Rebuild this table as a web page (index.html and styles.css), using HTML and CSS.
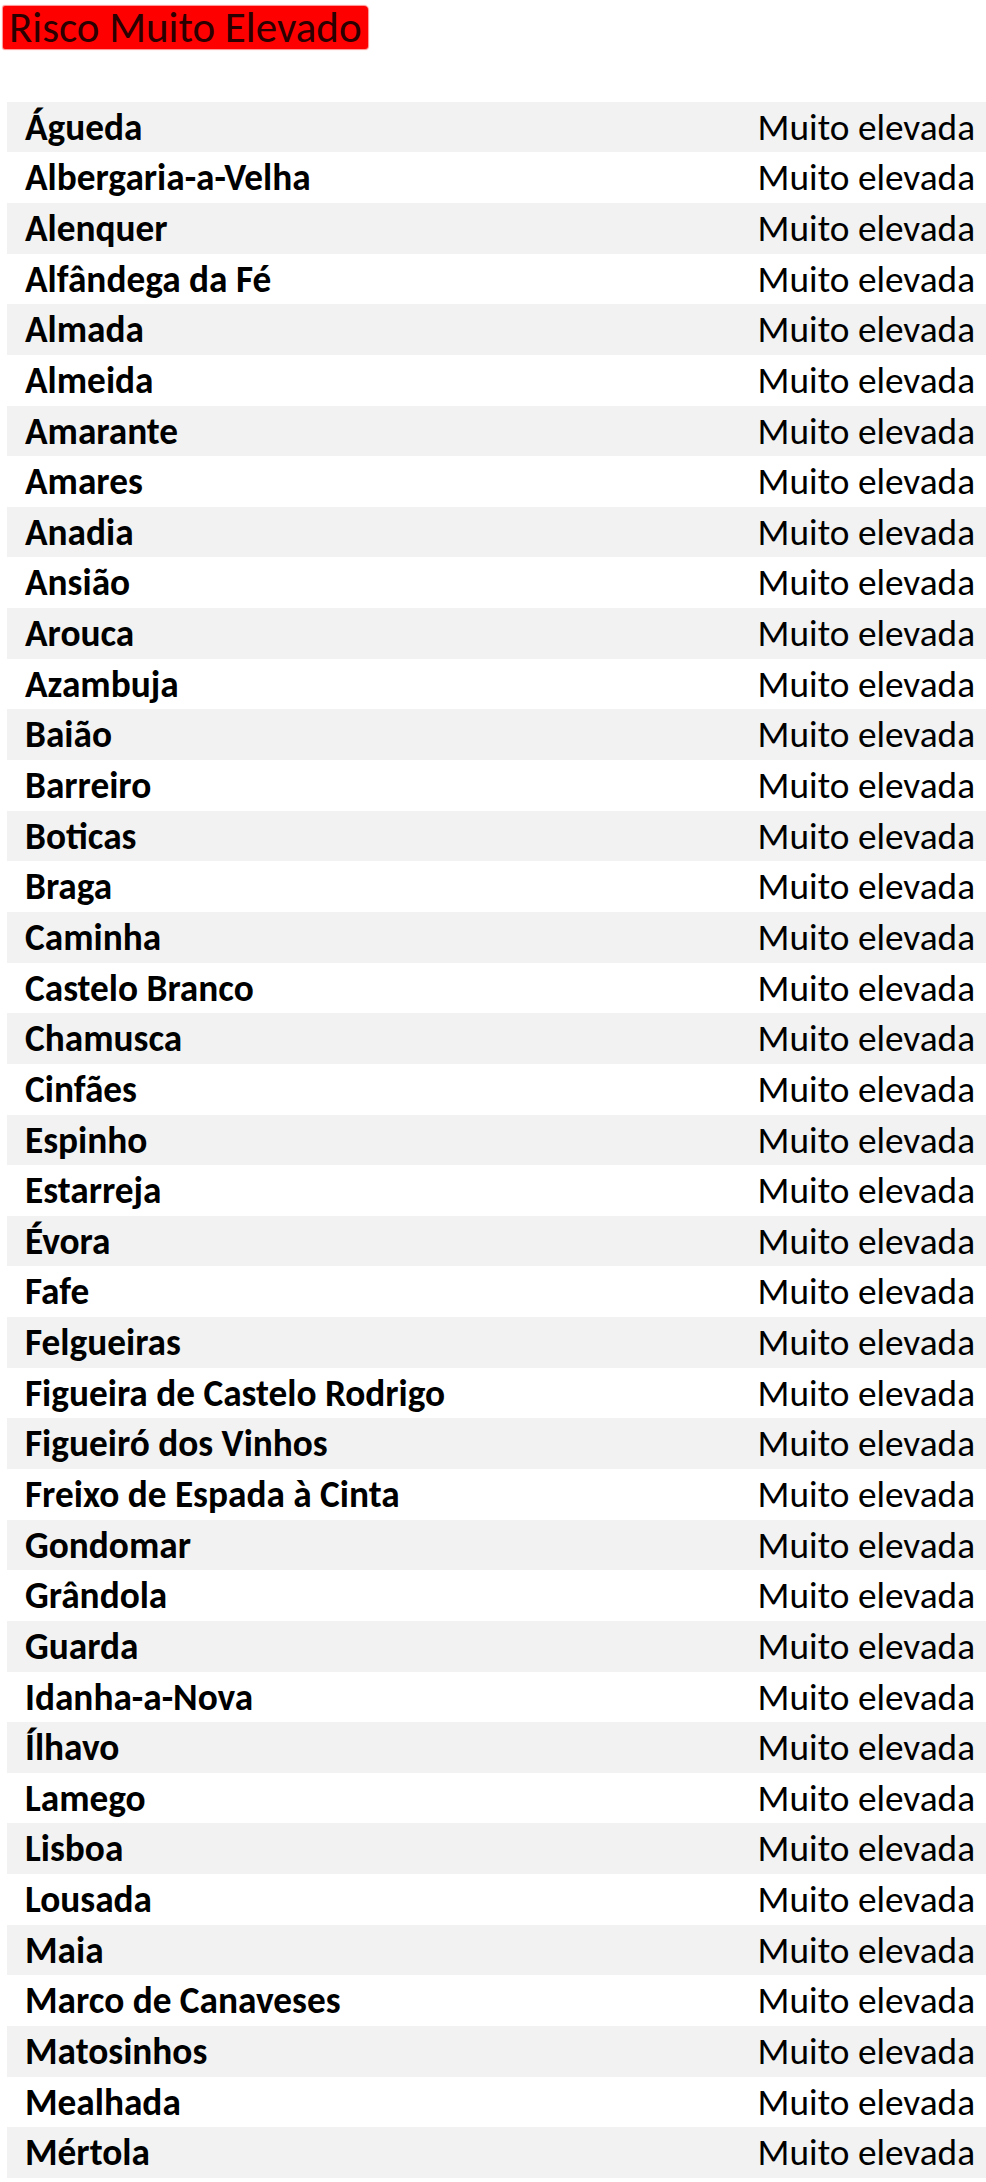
FILE: index.html
```html
<!DOCTYPE html>
<html lang="pt">
<head>
<meta charset="utf-8">
<title>Risco Muito Elevado</title>
<link rel="stylesheet" href="styles.css">
</head>
<body>
<header class="title-wrap"><h1 class="title">Risco Muito Elevado</h1></header>
<main class="sheet">
<div class="row"><span class="name">Águeda</span><span class="level">Muito elevada</span></div>
<div class="row"><span class="name">Albergaria-a-Velha</span><span class="level">Muito elevada</span></div>
<div class="row"><span class="name">Alenquer</span><span class="level">Muito elevada</span></div>
<div class="row"><span class="name">Alfândega da Fé</span><span class="level">Muito elevada</span></div>
<div class="row"><span class="name">Almada</span><span class="level">Muito elevada</span></div>
<div class="row"><span class="name">Almeida</span><span class="level">Muito elevada</span></div>
<div class="row"><span class="name">Amarante</span><span class="level">Muito elevada</span></div>
<div class="row"><span class="name">Amares</span><span class="level">Muito elevada</span></div>
<div class="row"><span class="name">Anadia</span><span class="level">Muito elevada</span></div>
<div class="row"><span class="name">Ansião</span><span class="level">Muito elevada</span></div>
<div class="row"><span class="name">Arouca</span><span class="level">Muito elevada</span></div>
<div class="row"><span class="name">Azambuja</span><span class="level">Muito elevada</span></div>
<div class="row"><span class="name">Baião</span><span class="level">Muito elevada</span></div>
<div class="row"><span class="name">Barreiro</span><span class="level">Muito elevada</span></div>
<div class="row"><span class="name">Boticas</span><span class="level">Muito elevada</span></div>
<div class="row"><span class="name">Braga</span><span class="level">Muito elevada</span></div>
<div class="row"><span class="name">Caminha</span><span class="level">Muito elevada</span></div>
<div class="row"><span class="name">Castelo Branco</span><span class="level">Muito elevada</span></div>
<div class="row"><span class="name">Chamusca</span><span class="level">Muito elevada</span></div>
<div class="row"><span class="name">Cinfães</span><span class="level">Muito elevada</span></div>
<div class="row"><span class="name">Espinho</span><span class="level">Muito elevada</span></div>
<div class="row"><span class="name">Estarreja</span><span class="level">Muito elevada</span></div>
<div class="row"><span class="name">Évora</span><span class="level">Muito elevada</span></div>
<div class="row"><span class="name">Fafe</span><span class="level">Muito elevada</span></div>
<div class="row"><span class="name">Felgueiras</span><span class="level">Muito elevada</span></div>
<div class="row"><span class="name">Figueira de Castelo Rodrigo</span><span class="level">Muito elevada</span></div>
<div class="row"><span class="name">Figueiró dos Vinhos</span><span class="level">Muito elevada</span></div>
<div class="row"><span class="name">Freixo de Espada à Cinta</span><span class="level">Muito elevada</span></div>
<div class="row"><span class="name">Gondomar</span><span class="level">Muito elevada</span></div>
<div class="row"><span class="name">Grândola</span><span class="level">Muito elevada</span></div>
<div class="row"><span class="name">Guarda</span><span class="level">Muito elevada</span></div>
<div class="row"><span class="name">Idanha-a-Nova</span><span class="level">Muito elevada</span></div>
<div class="row"><span class="name">Ílhavo</span><span class="level">Muito elevada</span></div>
<div class="row"><span class="name">Lamego</span><span class="level">Muito elevada</span></div>
<div class="row"><span class="name">Lisboa</span><span class="level">Muito elevada</span></div>
<div class="row"><span class="name">Lousada</span><span class="level">Muito elevada</span></div>
<div class="row"><span class="name">Maia</span><span class="level">Muito elevada</span></div>
<div class="row"><span class="name">Marco de Canaveses</span><span class="level">Muito elevada</span></div>
<div class="row"><span class="name">Matosinhos</span><span class="level">Muito elevada</span></div>
<div class="row"><span class="name">Mealhada</span><span class="level">Muito elevada</span></div>
<div class="row"><span class="name">Mértola</span><span class="level">Muito elevada</span></div>
</main>
</body>
</html>
```

FILE: styles.css
```css
html, body {
  margin: 0;
  padding: 0;
  background: #ffffff;
}

body {
  font-family: Carlito, Calibri, Lato, "Liberation Sans", sans-serif;
  color: #000000;
  width: 986px;
}

.title-wrap {
  padding: 6px 0 0 3px;
  height: 101.7px;
  box-sizing: border-box;
}

.title {
  display: inline-block;
  margin: 0;
  background: #ff0000;
  color: #2a0000;
  font-weight: 400;
  font-size: 43px;
  line-height: 43px;
  height: 43px;
  padding: 0 6px 0 6px;
  border-radius: 2px 4px 3px 2px;
  box-shadow: 0 0 1px 1px rgba(255, 0, 0, 0.45);
}

.sheet {
  padding-left: 7px;
}

.row {
  display: flex;
  justify-content: space-between;
  align-items: center;
  height: 50.65px;
  box-sizing: border-box;
  padding: 0 11px 0 18px;
  font-size: 37.3px;
  line-height: 50.65px;
  white-space: nowrap;
}

.row:nth-child(odd) {
  background: #f2f2f2;
}

.name {
  font-weight: 700;
}

.level {
  font-weight: 400;
}
```
